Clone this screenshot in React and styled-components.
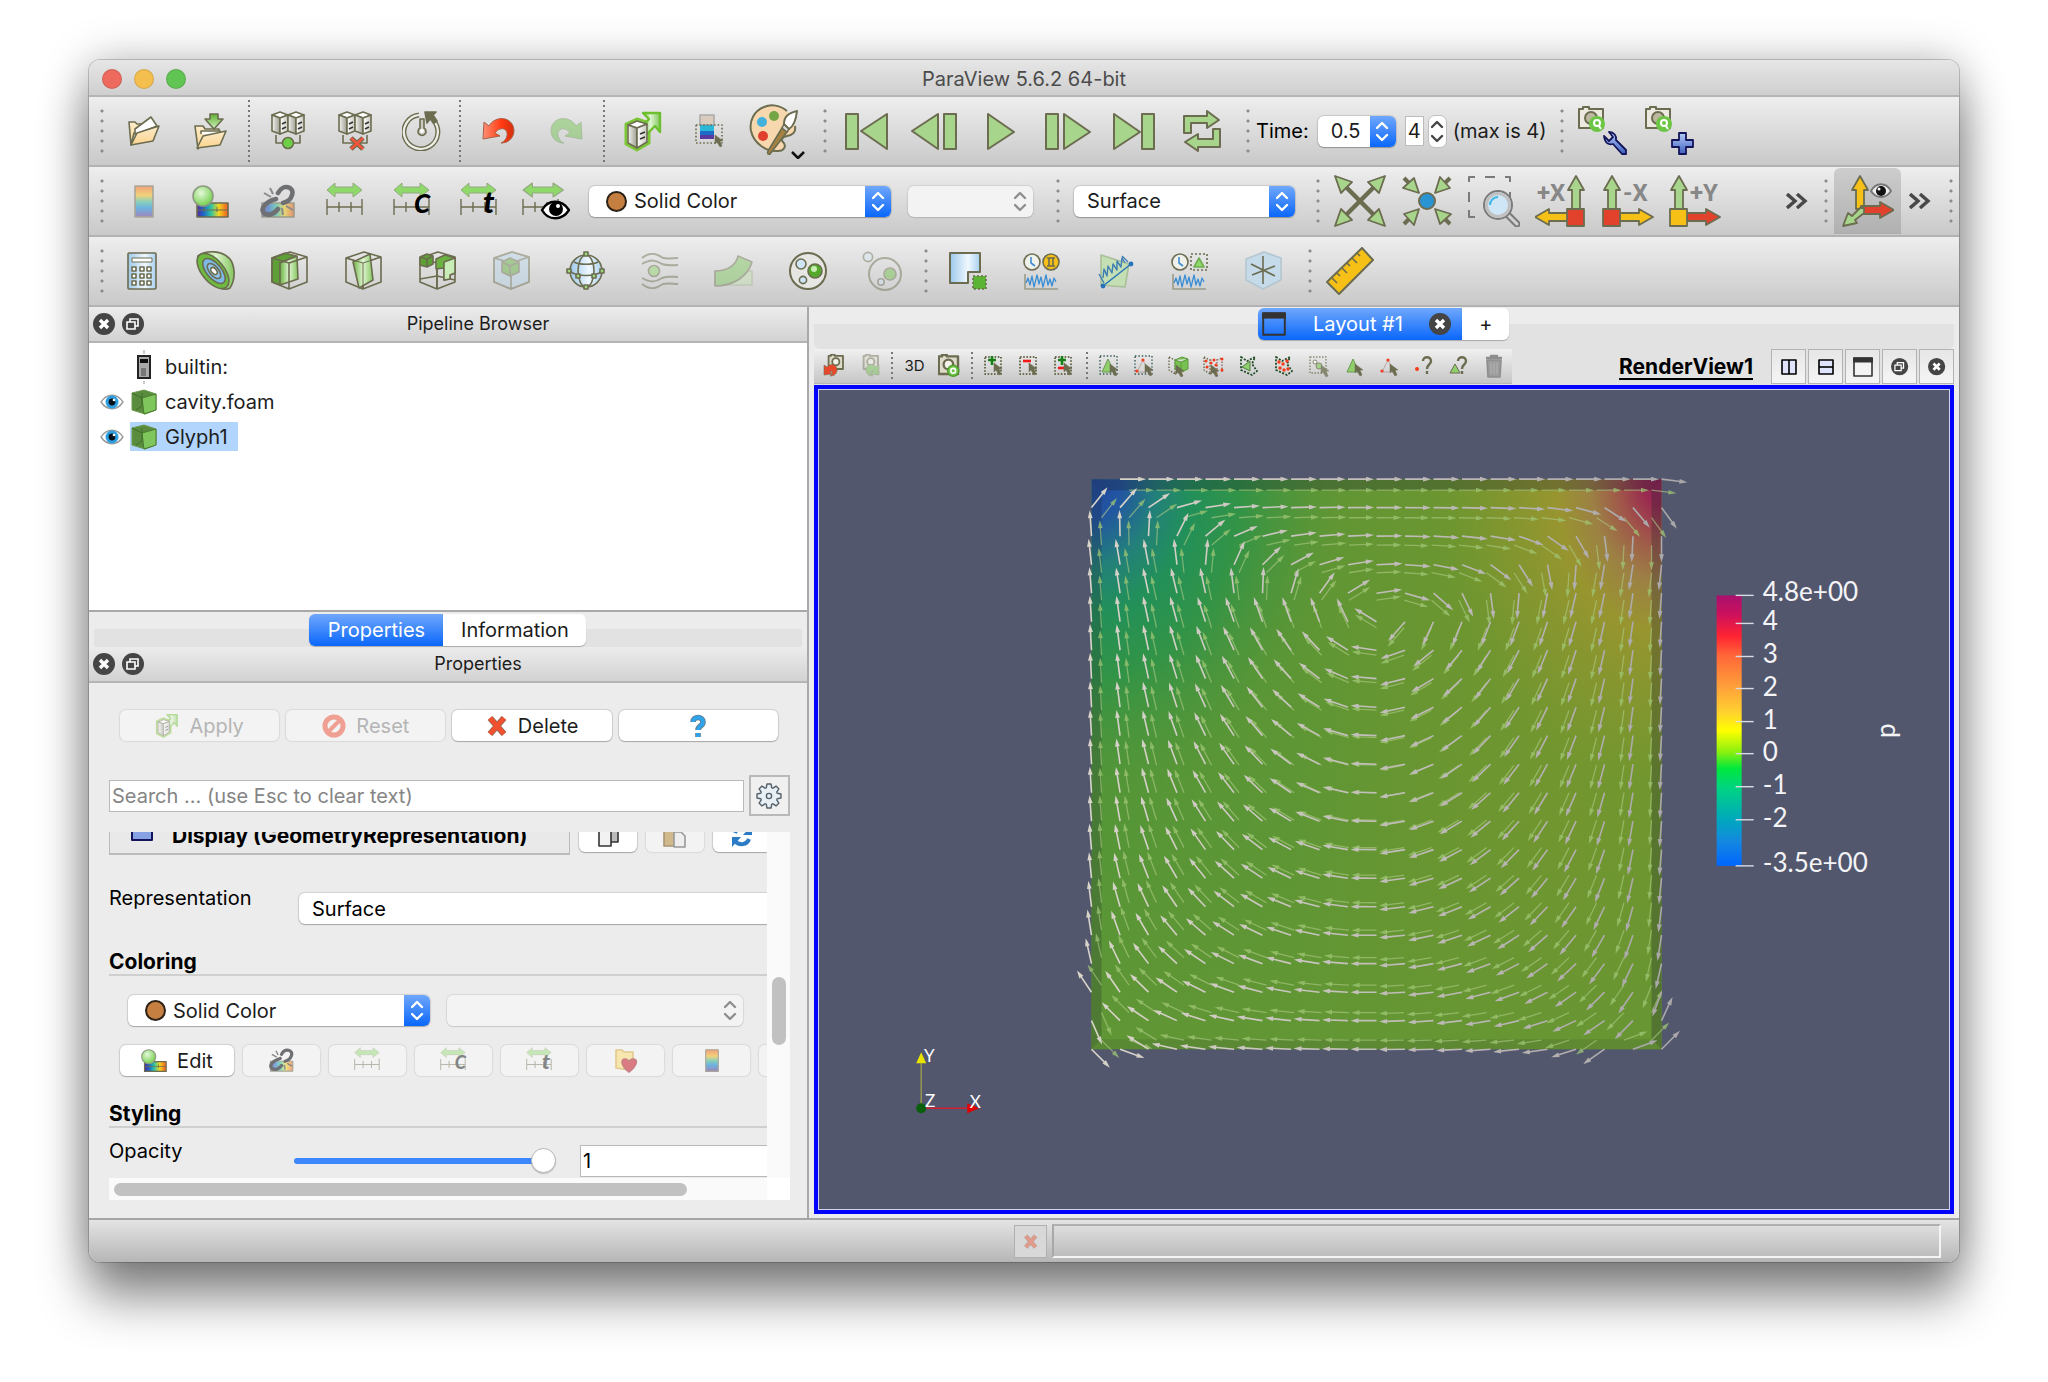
import React, { useMemo, useState } from "react";
import styled, { createGlobalStyle, css } from "styled-components";

const GlobalStyle = createGlobalStyle`
  * {
    box-sizing: border-box;
  }
  body {
    margin: 0;
    background: #fff;
    color: #1c1c1c;
    font-family: Inter, "Liberation Sans", sans-serif;
    font-size: 20px;
    line-height: 24px;
  }
  button, input, select {
    font: inherit;
    color: inherit;
    margin: 0;
  }
  svg {
    display: block;
    flex: none;
  }
`;

/* ---------- window frame ---------- */

const Desktop = styled.div`
  padding: 60px 89px 118px;
  overflow: hidden;
`;
const Window = styled.div`
  border-radius: 11px;
  background: #ececec;
  overflow: hidden;
  box-shadow: 0 0 0 1px rgba(0, 0, 0, 0.18), 0 0 44px rgba(0, 0, 0, 0.26),
    0 36px 50px rgba(0, 0, 0, 0.45);
`;
const TitleBar = styled.header`
  display: grid;
  grid-template-columns: 1fr auto 1fr;
  align-items: center;
  height: 37px;
  padding: 2px 13px 0;
  color: #4c4c4c;
  background: linear-gradient(#e6e6e6, #cfcfcf);
  border-bottom: 2px solid #b5b5b5;
`;
const Lights = styled.div`
  display: flex;
  gap: 12px;
`;
const Light = styled.button`
  width: 20px;
  height: 20px;
  padding: 0;
  border: 1px solid rgba(0, 0, 0, 0.12);
  border-radius: 50%;
  background: ${(p) => p.$color};
`;

/* ---------- tool bars ---------- */

const ToolBar = styled.div`
  display: flex;
  align-items: center;
  height: 70px;
  padding-left: 5px;
  background: linear-gradient(#eeeeee, #c9c9c9);
  border-bottom: 2px solid #b2b2b2;
`;
const Group = styled.div`
  display: flex;
  align-items: center;
  gap: ${(p) => p.$gap || 0}px;
  margin-left: ${(p) => p.$left || 0}px;
`;
const Handle = styled.span`
  flex: none;
  width: 16px;
  height: 50px;
  margin-left: ${(p) => p.$left || 0}px;
  background: radial-gradient(circle at 8px 5px, #8b8b8b 1px, transparent 2px) 0 0 / 16px 10px;
`;
const Separator = styled.span`
  flex: none;
  width: 10px;
  align-self: stretch;
  margin: 3px 0;
  background: linear-gradient(#777 2px, transparent 2px) 4px 0 / 2px 5px repeat-y;
`;
const ToolButton = styled.button`
  display: flex;
  align-items: center;
  justify-content: center;
  flex: none;
  width: ${(p) => p.$width || 67}px;
  height: 66px;
  padding: 0;
  border: 0;
  background: none;
  ${(p) =>
    p.$pressed &&
    css`
      border-radius: 6px 6px 0 0;
      background: linear-gradient(#cdcdcd, #b0b0b0);
    `}
`;
const Spacer = styled.span`
  flex: 1;
`;

/* ---------- form controls ---------- */

const ComboBox = styled.div`
  display: flex;
  align-items: center;
  flex: none;
  width: ${(p) => p.$width}px;
  height: 31px;
  margin-left: ${(p) => p.$left || 0}px;
  padding-left: ${(p) => p.$pad || 13}px;
  border-radius: 6px;
  overflow: hidden;
  background: ${(p) => (p.$off ? "#f3f3f3" : "#fff")};
  box-shadow: 0 0 1px 1px rgba(0, 0, 0, ${(p) => (p.$off ? 0.08 : 0.12)}),
    0 1px 1px rgba(0, 0, 0, ${(p) => (p.$off ? 0.08 : 0.2)});
  select {
    flex: 1;
    min-width: 0;
    height: 31px;
    padding: 0;
    border: 0;
    outline: 0;
    appearance: none;
    background: none;
    opacity: 1;
  }
`;
const ComboArrow = styled.span`
  display: flex;
  align-items: center;
  justify-content: center;
  width: 26px;
  height: 31px;
  background: ${(p) => (p.$off ? "none" : "linear-gradient(#6fa7fb, #0a67fb)")};
`;
const Swatch = styled.span`
  width: 21px;
  height: 21px;
  margin-right: 7px;
  border: 2px solid #2b2116;
  border-radius: 50%;
  background: #c47f41;
`;
const TimeLabel = styled.label`
  margin-right: 9px;
  white-space: nowrap;
  color: #000;
`;
const StepField = styled.input`
  width: 19px;
  height: 30px;
  margin-left: 9px;
  padding: 0 2px;
  border: 1px solid #bbb;
  background: #fff;
`;
const Stepper = styled.span`
  display: flex;
  align-items: center;
  justify-content: center;
  width: 19px;
  height: 33px;
  margin: 0 6px 0 4px;
  border: 1px solid #c0c0c0;
  border-radius: 7px;
  background: #fff;
`;
const PushButton = styled.button`
  display: flex;
  align-items: center;
  justify-content: center;
  gap: 10px;
  flex: ${(p) => (p.$width ? "none" : 1)};
  width: ${(p) => (p.$width ? p.$width + "px" : "auto")};
  height: 31px;
  padding: 0;
  border: 0;
  border-radius: 6px;
  background: #fff;
  box-shadow: 0 0 1px 1px rgba(0, 0, 0, 0.12), 0 1px 1px rgba(0, 0, 0, 0.2);
  &:disabled {
    color: #b5b5b5;
    background: #f3f3f3;
    box-shadow: 0 0 1px 1px rgba(0, 0, 0, 0.08);
  }
`;

/* ---------- left docks ---------- */

const Body = styled.div`
  display: flex;
  background: #ececec;
`;
const LeftColumn = styled.div`
  flex: 0 0 38.5%;
  min-width: 0;
  border-right: 2px solid #a9a9a9;
`;
const DockTitle = styled.div`
  display: grid;
  grid-template-columns: 60px 1fr;
  align-items: center;
  height: 36px;
  font-size: 18px;
  text-align: center;
  background: linear-gradient(#ececec, #d2d2d2);
  border-bottom: 2px solid #b4b4b4;
`;
const DockButtons = styled.div`
  display: flex;
  gap: 6px;
  padding-left: 4px;
`;
const RoundButton = styled.button`
  padding: 0;
  border: 0;
  background: none;
`;
const Tree = styled.ul`
  height: 269px;
  margin: 0;
  padding: 6px 0 0 11px;
  list-style: none;
  background: #fff;
  border-bottom: 2px solid #a9a9a9;
`;
const TreeRow = styled.li`
  display: flex;
  align-items: center;
  height: 35px;
`;
const EyeSlot = styled.span`
  display: flex;
  width: 30px;
`;
const TreeItem = styled.span`
  display: flex;
  align-items: center;
  height: 29px;
  padding-right: 10px;
  background: ${(p) => (p.$selected ? "#b2d5fe" : "none")};
`;
const TreeIcon = styled.span`
  display: flex;
  justify-content: center;
  width: 27px;
  margin-right: 8px;
`;
const TabStrip = styled.div`
  display: flex;
  justify-content: center;
  height: 35px;
  margin: 0 5px;
  padding-top: 2px;
  background: linear-gradient(transparent 17px, #e2e2e2 17px);
`;
const Tab = styled.button`
  display: flex;
  align-items: center;
  justify-content: center;
  width: ${(p) => p.$width}px;
  height: 32px;
  padding: 0;
  border: 0;
  color: ${(p) => (p.$active ? "#fff" : "#1c1c1c")};
  background: ${(p) => (p.$active ? "linear-gradient(#6fa7fb, #0a67fb)" : "#fff")};
  border-radius: ${(p) => (p.$active ? "6px 0 0 6px" : "0 6px 6px 0")};
  box-shadow: 0 1px 1px rgba(0, 0, 0, 0.25);
`;
const PropertiesPanel = styled.div`
  padding: 27px 17px 16px 20px;
`;
const ActionRow = styled.div`
  display: flex;
  gap: 7px;
  padding: 0 12px 0 11px;
`;
const SearchRow = styled.div`
  display: flex;
  align-items: center;
  gap: 5px;
  margin-top: 34px;
`;
const SearchField = styled.input`
  flex: 1;
  height: 32px;
  padding: 0 2px;
  border: 1px solid #b9b9b9;
  outline: 0;
  background: #fff;
  &::placeholder {
    color: #858585;
    opacity: 1;
  }
`;
const GearButton = styled.button`
  display: flex;
  align-items: center;
  justify-content: center;
  width: 41px;
  height: 41px;
  padding: 0;
  border: 2px solid #b9b9b9;
  background: #f0f0f0;
`;
const ScrollArea = styled.div`
  display: grid;
  grid-template-columns: 1fr 23px;
  grid-template-rows: 346px 22px;
  margin-top: 16px;
`;
const ScrollContent = styled.div`
  min-width: 0;
  overflow: hidden;
`;
const VerticalTrack = styled.div`
  padding: 145px 4px 0 5px;
  background: #fafafa;
`;
const HorizontalTrack = styled.div`
  padding: 5px 80px 0 5px;
  background: #fafafa;
`;
const Corner = styled.div`
  background: #fff;
`;
const Thumb = styled.div`
  width: ${(p) => (p.$vertical ? "14px" : "100%")};
  height: ${(p) => (p.$vertical ? 68 : 13)}px;
  border-radius: 7px;
  background: #c1c1c1;
`;
const DisplayRow = styled.div`
  display: flex;
  align-items: center;
  gap: 9px;
  margin-top: -15px;
`;
const DisplayHeader = styled.div`
  display: flex;
  align-items: center;
  gap: 19px;
  flex: none;
  width: 461px;
  height: 38px;
  padding-left: 21px;
  font-size: 21px;
  font-weight: 700;
  color: #000;
  background: #e9e9e9;
  border: 1px solid #bbb;
  border-bottom-width: 2px;
`;
const FieldRow = styled.div`
  display: flex;
  align-items: flex-start;
  margin-top: ${(p) => p.$top}px;
  color: #000;
`;
const FieldLabel = styled.label`
  flex: none;
  width: ${(p) => p.$width}px;
`;
const Offset = styled.div`
  display: flex;
  padding-top: 7px;
`;
const SectionTitle = styled.h2`
  height: 26px;
  margin: ${(p) => p.$top}px 0 0;
  font-size: 21px;
  line-height: 24px;
  font-weight: 700;
  color: #000;
  border-bottom: 2px solid #cfcfcf;
`;
const ControlRow = styled.div`
  display: flex;
  gap: ${(p) => p.$gap}px;
  margin-top: 19px;
  padding-left: ${(p) => p.$left}px;
`;
const Slider = styled.input`
  flex: none;
  width: 262px;
  height: 26px;
  margin: 9px 24px 0 0;
  appearance: none;
  background: none;
  &::-webkit-slider-runnable-track {
    height: 6px;
    border-radius: 3px;
    background: linear-gradient(90deg, #3c87fb 240px, #c4c4c4 240px);
  }
  &::-webkit-slider-thumb {
    appearance: none;
    width: 25px;
    height: 25px;
    margin-top: -10px;
    border: 1px solid #b8b8b8;
    border-radius: 50%;
    background: #fff;
    box-shadow: 0 1px 1px rgba(0, 0, 0, 0.2);
  }
`;
const ValueField = styled.input`
  flex: none;
  width: 220px;
  height: 32px;
  margin-top: 6px;
  padding: 0 2px;
  border: 1px solid #b9b9b9;
  background: #fff;
`;

/* ---------- render view ---------- */

const RightColumn = styled.div`
  display: flex;
  flex-direction: column;
  flex: 1;
  min-width: 0;
  padding: 0 5px 4px;
`;
const LayoutStrip = styled(TabStrip)`
  height: 42px;
  margin: 0;
  padding-top: 1px;
  border-radius: 6px;
`;
const LayoutTab = styled(Tab)`
  justify-content: space-between;
  padding: 0 10px 0 4px;
`;
const ViewHeader = styled.div`
  display: flex;
  align-items: center;
  height: 36px;
  padding-bottom: 1px;
  background: #e2e2e2;
`;
const ViewTools = styled.div`
  display: flex;
  align-items: center;
  height: 35px;
  padding-left: 3px;
  font-size: 15px;
  background: linear-gradient(#f0f0f0, #c6c6c6);
  border-bottom: 1px solid #b5b5b5;
  button {
    height: 34px;
  }
`;
const ViewName = styled.span`
  margin: 0 18px 0 auto;
  font-size: 21px;
  font-weight: 700;
  color: #000;
  text-decoration: underline;
  text-decoration-thickness: 2px;
  text-underline-offset: 4px;
`;
const ViewButtons = styled.div`
  display: flex;
  gap: 2px;
`;
const ViewButton = styled.button`
  display: flex;
  align-items: center;
  justify-content: center;
  width: 35px;
  height: 35px;
  padding: 0;
  border: 1px solid #b3b3b3;
  background: linear-gradient(#e6e6e6, #f5f5f5);
`;
const Viewport = styled.div`
  flex: 1;
  display: flex;
  min-height: 0;
  border: 4px solid #0000fd;
  outline: 1px solid #cfd2ee;
  outline-offset: -5px;
  background: #52576e;
  svg {
    flex: 1;
    width: 100%;
    min-width: 0;
  }
`;

const StatusBar = styled.footer`
  display: flex;
  align-items: center;
  justify-content: flex-end;
  gap: 5px;
  height: 44px;
  padding-right: 18px;
  background: linear-gradient(#e4e4e4, #b6b6b6);
  border-top: 2px solid #a5a5a5;
`;
const StopButton = styled.button`
  display: flex;
  align-items: center;
  justify-content: center;
  width: 33px;
  height: 33px;
  padding: 0;
  border: 1px solid #b0b0b0;
  background: #d8d8d8;
`;
const Progress = styled.div`
  width: 48%;
  height: 34px;
  border: 2px solid #f4f4f4;
  border-top-color: #b0b0b0;
  border-left-color: #a8a8a8;
`;

/* ---------- icons ---------- */

const OLIVE = "#6c6c50";
const GREEN = "#a7d58b";

const Svg = ({ w, h, s = 1, fade, children }) => (
  <svg
    width={w * s}
    height={h * s}
    viewBox={`0 0 ${w} ${h}`}
    fill="none"
    stroke={OLIVE}
    strokeWidth="1.6"
    strokeLinejoin="round"
    opacity={fade ? 0.45 : 1}
    aria-hidden="true"
  >
    {children}
  </svg>
);

const Gradient = ({ id, stops, flat }) => (
  <linearGradient id={id} x1="0" y1="0" x2={flat ? 1 : 0} y2={flat ? 0 : 1}>
    {stops.map(([offset, color, opacity = 1]) => (
      <stop key={offset} offset={offset} stopColor={color} stopOpacity={opacity} />
    ))}
  </linearGradient>
);

const Defs = () => (
  <svg width="0" height="0" style={{ position: "absolute" }} aria-hidden="true">
    <defs>
      <Gradient id="side" flat stops={[[0, "#f4f4f0"], [1, "#9d9d93"]]} />
      <Gradient id="front" flat stops={[[0, "#fff"], [1, "#c8c8c0"]]} />
      <Gradient id="folder" stops={[[0, "#fdeccb"], [1, "#fbd28d"]]} />
      <Gradient id="leaf" stops={[[0, "#5cb030"], [1, "#d5f2c5"]]} />
      <Gradient id="leafAcross" flat stops={[[0, "#6bb340"], [0.5, "#dff5d2"], [1, "#83c65c"]]} />
      <Gradient id="red" flat stops={[[0, "#ff9077"], [0.6, "#ff3a10"], [1, "#d33010"]]} />
      <Gradient id="sky" flat stops={[[0, "#9cc8ea"], [0.6, "#f0f8ff"], [1, "#a8d0ee"]]} />
      <Gradient id="navy" stops={[[0, "#b4cdf8"], [1, "#3f5fc0"]]} />
      <Gradient
        id="bar"
        stops={[[0, "#eda07a"], [0.3, "#f2d27a"], [0.5, "#8cd0b8"], [0.7, "#6bb4e0"], [1, "#a184bb"]]}
      />
      <Gradient
        id="rainbow"
        flat
        stops={[[0, "#5a2a9a"], [0.2, "#1c62c8"], [0.45, "#2fc3a0"], [0.7, "#f4d520"], [1, "#ee5a20"]]}
      />
      <radialGradient id="ball" cx="0.4" cy="0.35" r="0.7">
        <stop offset="0" stopColor="#e4f7da" />
        <stop offset="1" stopColor="#6fcf45" />
      </radialGradient>
    </defs>
  </svg>
);

const FolderIcon = () => (
  <Svg w={32} h={31}>
    <path d="M1 6h6l2 2h6v6l-9 3-3 12H3z" fill="url(#folder)" />
    <path d="M7 13 23 1l6 9-18 7-4 1z" fill="#fff" />
    <path d="M3 29 9 17 31 10 25 25z" fill="url(#folder)" />
  </Svg>
);
const ImportIcon = () => (
  <Svg w={33} h={37}>
    <path d="M1 13h8l2 3h14v6l-16 2-5 12z" fill="url(#folder)" />
    <path d="M7 21V18h19v4" fill="#fff" />
    <path d="M3 35 9 23 32 18 26 32z" fill="url(#folder)" />
    <path d="M16 1h8v5h5l-9 10-9-10h5z" fill="url(#leaf)" />
  </Svg>
);
const Racks = () => (
  <>
    <path d="M5 24v8h24v-8" />
    {[1, 17].map((x) => (
      <g key={x} transform={`translate(${x} 1)`}>
        <path d="M0 3 8 0l8 3-8 3z" fill="#fff" />
        <path d="M0 3l8 3v16l-8-3z" fill="url(#side)" />
        <path d="M8 6l8-3v16l-8 3z" fill="url(#front)" />
        <path d="m10 12 4-2m-4 7 4-2" stroke="#333" />
      </g>
    ))}
  </>
);
const ConnectIcon = () => (
  <Svg w={34} h={40}>
    <Racks />
    <circle cx="17" cy="32" r="5.5" fill="#6ccf45" />
  </Svg>
);
const DisconnectIcon = () => (
  <Svg w={34} h={40}>
    <Racks />
    <path d="m13 27 12 11m0-11L13 38" strokeWidth="5" />
    <path d="m13 27 12 11m0-11L13 38" stroke="#f4553a" strokeWidth="2.6" />
  </Svg>
);
const ResetIcon = () => (
  <Svg w={40} h={40}>
    <path d="M17 4A17 17 0 1 0 31 9" strokeWidth="5" />
    <path d="M17 4A17 17 0 1 0 31 9" strokeWidth="2.2" stroke="#efefe8" />
    <path d="M23 1h11l-3 3 4 6-3 2-4-4-3 4z" fill={OLIVE} />
    <path d="M18 8h4v9a4 4 0 1 1-4 0z" fill="#c9c9bd" />
    <circle cx="20" cy="20" r="2" fill="#fff" stroke="none" />
  </Svg>
);
const UndoIcon = ({ redo }) => (
  <Svg w={34} h={28} fade={redo}>
    <path
      transform={redo ? "translate(34 0) scale(-1 1)" : undefined}
      d="M1 22 2 5l5 4C12 0 25-1 30 7c5 8 0 19-11 19 7-3 8-12 3-14-4-1-7 1-9 4l5 3z"
      fill={redo ? "#6fc24a" : "url(#red)"}
      stroke={redo ? "#6a9a55" : "#a8604a"}
      strokeWidth="1"
    />
  </Svg>
);
const ApplyIcon = ({ s, fade }) => (
  <Svg w={40} h={42} s={s} fade={fade}>
    <path d="M3 14 14 9l12 4v20l-12 7-11-6z" fill="#fff" stroke="#7cc636" strokeWidth="3" />
    <path d="M20 3h17v19l-5-6-8 8-6-6 8-9z" fill="url(#leafAcross)" stroke="#6cc02e" strokeWidth="2.4" />
    <path d="M5 15 14 11l10 3-10 4z" fill="#fff" />
    <path d="m5 15 9 3v20l-9-5z" fill="url(#side)" />
    <path d="m14 18 10-4v18l-10 6z" fill="url(#front)" />
    <path d="m17 24 5-2m-5 7 5-2" stroke="#333" />
  </Svg>
);
const Cursor = ({ x, y }) => (
  <path
    transform={`translate(${x} ${y})`}
    d="M0 0v9l2-2 3 5 2-1-2-5h3z"
    fill={OLIVE}
    strokeWidth="0.5"
  />
);
const PickMapIcon = () => (
  <Svg w={30} h={34}>
    <rect x="5" y="1" width="14" height="10" fill="#d9cbbd" stroke="#aaa" />
    <rect x="5" y="11" width="14" height="14" fill="#1c6cc8" stroke="none" />
    <rect x="5" y="11" width="14" height="6" fill="#2bb8d8" stroke="none" />
    <rect x="5" y="21" width="14" height="4" fill="#5b3aa0" stroke="none" />
    <rect x="1" y="11" width="26" height="18" strokeDasharray="1.6 2" />
    <Cursor x={20} y={21} />
  </Svg>
);
const PaletteIcon = () => (
  <Svg w={56} h={56}>
    <path
      d="M38 8C31 2 22 1 15 4 5 8 0 18 2 28c3 13 16 21 27 20 6 0 9-5 5-9-3-3 0-5 4-6 6-1 9-4 8-10"
      fill="#f7d8ae"
      strokeWidth="2"
    />
    <circle cx="13" cy="19" r="5" fill="#42b2dc" stroke="none" />
    <circle cx="25" cy="13" r="5" fill="#74a544" stroke="none" />
    <circle cx="14" cy="33" r="5" fill="#e0402e" stroke="none" />
    <path d="m33 25 5 4-17 22c-2 1-3-1-2-3z" fill="#a58242" />
    <path d="m33 25 2-4 5 5-2 3z" fill="#ddd" />
    <path d="M35 21c0-8 5-11 13-13-1 9-3 15-8 18z" fill="#fff" strokeWidth="2" />
    <path d="m43 49 6 6 6-6" stroke="#111" strokeWidth="2.5" />
  </Svg>
);

const VcrIcon = ({ w, bar, tri }) => (
  <Svg w={w} h={37}>
    <g fill={GREEN} strokeWidth="2">
      {bar !== undefined && <rect x={bar} y="1" width="12" height="35" />}
      <path d={tri} />
    </g>
  </Svg>
);
const LoopIcon = () => (
  <Svg w={38} h={42}>
    <g fill={GREEN} strokeWidth="2">
      <path d="M1 6h23V1l12 9-12 8v-5H8v10H1z" />
      <path d="M37 19v18H15v4L2 32l13-8v5h15V19z" />
    </g>
  </Svg>
);
const Camera = () => (
  <>
    <path d="M5 1h6v2h14v19H1V3h4z" fill="#eceae0" strokeWidth="2" />
    <circle cx="13" cy="12" r="6" fill="#bbb89e" strokeWidth="2" />
    <circle cx="19" cy="18" r="8" fill="#6cc644" stroke="none" />
    <circle cx="19" cy="17" r="3" stroke="#fff" strokeWidth="2" />
    <path d="m21 20 2 3" stroke="#fff" strokeWidth="2" />
  </>
);
const CameraIcon = ({ plus }) => (
  <Svg w={50} h={50}>
    <Camera />
    {plus ? (
      <path d="M34 27h7v7h7v7h-7v7h-7v-7h-7v-7h7z" fill="url(#navy)" stroke="#14145a" strokeWidth="1.8" />
    ) : (
      <path
        d="M26 30c1 8 5 9 9 8l9 10h4v-4L38 34c1-4-2-8-7-8l4 5-4 4z"
        fill="url(#navy)"
        stroke="#14145a"
        strokeWidth="1.8"
      />
    )}
  </Svg>
);

const MapBarIcon = ({ s }) => (
  <Svg w={20} h={33} s={s}>
    <rect x="1" y="1" width="18" height="31" fill="url(#bar)" stroke="#aaa699" />
  </Svg>
);
const EditMapIcon = ({ s }) => (
  <Svg w={37} h={33} s={s}>
    <rect x="5" y="18" width="31" height="14" fill="url(#rainbow)" />
    <path d="M5 25h31m-24-3v5m13-5v5" strokeWidth="1" />
    <circle cx="11" cy="11" r="10" fill="url(#ball)" stroke="#8f9a83" />
  </Svg>
);
const ChainIcon = ({ s }) => (
  <Svg w={36} h={35} s={s}>
    <g opacity="0.55">
      <rect x="2" y="19" width="32" height="14" fill="url(#rainbow)" />
    </g>
    <path
      d="M18 9c5-10 17-6 14 2-1 4-5 7-9 8m-7-4C5 18 0 25 4 29c5 4 11 0 14-4"
      stroke="#6f7073"
      strokeWidth="4.6"
      strokeLinecap="round"
    />
    <path d="m10 4 3 6M4 9l7 4m11 11 1 7m3-9 7 4" stroke="#8a8a8a" strokeWidth="2" />
  </Svg>
);
const RangeIcon = ({ letter, eye, s, fade }) => (
  <Svg w={eye ? 48 : 38} h={38} s={s} fade={fade}>
    <path
      transform={eye ? "scale(1.15 1)" : undefined}
      d="m1 8 8-7v4h18V1l9 7-9 7v-4H9v4z"
      fill="#8fd96b"
      stroke="#93a980"
      strokeWidth="1"
    />
    <path d="M1 17v16m35-16v16M1 25h35M13 20v10m12-10v10" strokeWidth="1.4" />
    {letter && (
      <text
        x={letter === "C" ? 21 : 23}
        y="31"
        fill="#000"
        stroke="none"
        fontFamily="Lato, sans-serif"
        fontSize={letter === "C" ? 26 : 31}
        fontStyle="italic"
        fontWeight="900"
      >
        {letter}
      </text>
    )}
    {eye && (
      <>
        <path d="M20 28c6-11 20-11 27 0-7 11-21 11-27 0z" fill="#fff" stroke="#000" strokeWidth="2.4" />
        <circle cx="34" cy="27" r="7" fill="#000" stroke="none" />
        <circle cx="36" cy="24" r="2" fill="#fff" stroke="none" />
      </>
    )}
  </Svg>
);

// one arrow pointing to the top left, turned into the four corners
const Corners = ({ inward }) =>
  [0, 90, 180, 270].map((angle) => (
    <g key={angle} transform={`rotate(${angle} 26 26)`}>
      {inward ? (
        <>
          <path d="m3 3 7 7" strokeWidth="4" />
          <path d="M18 18 13 3 2 13z" fill={GREEN} strokeWidth="1.8" />
        </>
      ) : (
        <>
          <path d="M26 26 12 12" strokeWidth="4.5" />
          <path d="m1 1 17 6L7 18z" fill={GREEN} strokeWidth="1.8" />
        </>
      )}
    </g>
  ));
const ZoomFitIcon = () => (
  <Svg w={52} h={52}>
    <Corners />
  </Svg>
);
const ZoomDataIcon = () => (
  <Svg w={52} h={52}>
    <Corners inward />
    <circle cx="26" cy="26" r="8" fill="#2a93d2" strokeWidth="2" />
  </Svg>
);
const ZoomBoxIcon = () => (
  <Svg w={52} h={52}>
    <path d="M1 7V2h6m10 0h10m10 0h5v5M1 17v10m0 8v7h6m35-25v6" stroke="#7a7a7a" strokeWidth="2" />
    <path d="m38 38 11 11" stroke="#7a7a7a" strokeWidth="7" strokeLinecap="round" />
    <path d="m38 38 11 11" stroke="#d2d2d2" strokeWidth="3" strokeLinecap="round" />
    <circle cx="30" cy="30" r="14" fill="#cfe6f7" stroke="#7a7a7a" strokeWidth="2" />
    <circle cx="30" cy="30" r="11.5" stroke="#c0c0c0" strokeWidth="3" />
    <path d="M22 30a8 8 0 0 1 8-8" stroke="#3ab4e4" strokeWidth="2" />
  </Svg>
);
const UP = "M-4 0v-19h-4l8-14 8 14h-4V0z";
const AxisIcon = ({ label, left, box, side }) => {
  const x = left ? 41 : 10;
  return (
    <Svg w={52} h={52}>
      <g strokeWidth="1.8">
        <path transform={`translate(${x} 34)`} d={UP} fill={GREEN} />
        <path transform={`translate(${x} 42) rotate(${left ? -90 : 90}) translate(0 -8)`} d={UP} fill={side} />
        <rect x={x - 9} y="34" width="17" height="17" fill={box} />
      </g>
      <text
        x={left ? 2 : 21}
        y="26"
        fill="#878787"
        stroke="none"
        fontFamily="Roboto, sans-serif"
        fontSize="24"
        fontWeight="700"
      >
        {label}
      </text>
    </Svg>
  );
};
const OrientationIcon = () => (
  <Svg w={52} h={52}>
    <g strokeWidth="1.8">
      <path transform="translate(18 34)" d={UP} fill="#f6c016" />
      <path transform="translate(19 35) rotate(90)" d={UP} fill="#e2412c" />
      <path d="m18 33-8 8-4-3-5 13 14-3-2-3 9-7v-5z" fill={GREEN} />
    </g>
    <path d="M29 16c5-9 15-9 20 0-5 8-15 8-20 0z" fill="#eee" stroke="#777" strokeWidth="2" />
    <circle cx="39" cy="16" r="5" fill="#111" stroke="none" />
    <circle cx="37" cy="14" r="1.5" fill="#fff" stroke="none" />
  </Svg>
);
const MoreIcon = () => (
  <Svg w={22} h={16}>
    <path d="m1 1 8 7-8 7M11 1l8 7-8 7" stroke="#484848" strokeWidth="3.4" strokeLinejoin="miter" />
  </Svg>
);

const CalculatorIcon = () => (
  <Svg w={30} h={38}>
    <rect x="1" y="1" width="28" height="36" rx="1" fill="url(#sky)" />
    <rect x="5" y="6" width="20" height="4" fill="#fff" strokeWidth="1" />
    {[15, 22, 29].map((y) =>
      [5, 13, 20].map((x) => <rect key={x + "-" + y} x={x} y={y} width="4" height="4" fill="#fff" />)
    )}
  </Svg>
);
const ContourIcon = () => (
  <Svg w={40} h={40}>
    <path d="M2 5C10-1 26-1 34 8c5 7 6 20 0 29-5 3-14 0-20-7C7 23 0 12 2 5z" fill="url(#leafAcross)" />
    <ellipse cx="17" cy="20" rx="21" ry="11" transform="rotate(50 17 20)" fill="#6dba3f" />
    <ellipse cx="18" cy="20" rx="15" ry="7.5" transform="rotate(50 18 20)" fill="#7db9e6" />
    <ellipse cx="18" cy="20" rx="9" ry="4.5" transform="rotate(50 18 20)" fill="#8fc6ee" />
    <ellipse cx="18" cy="20" rx="4" ry="2.5" transform="rotate(50 18 20)" fill="#fff" />
  </Svg>
);
const CubeWire = () => <path d="M1 7 19 1l17 5v25l-18 7-17-7zM1 7l17 5 18-6M18 12v26" />;
const ClipIcon = () => (
  <Svg w={38} h={40}>
    <path d="M1 7 14 2l11 3-16 7v22L1 31z" fill="#5ea036" />
    <path d="m9 12 17-7 1 23-18 6z" fill="url(#leafAcross)" />
    <CubeWire />
  </Svg>
);
const SliceIcon = () => (
  <Svg w={38} h={40}>
    <CubeWire />
    <path d="m8 11 17-8 3 26-14 8z" fill="url(#leafAcross)" />
    <path d="M1 7l17 5 18-6M18 12v26" strokeWidth="1" />
  </Svg>
);
const ThresholdIcon = () => (
  <Svg w={38} h={40}>
    <CubeWire />
    <path d="m1 28 17-3 18 4M18 12v26" />
    <path d="m1 6 7-3 6 2v8l-6 3-7-2z" fill="#5ea036" />
    <path d="m1 6 7 2 6-3M8 8v8" />
    <path d="m17 8 9-4 10 3v15l-5 2v4l-6 1V17l-8 1z" fill="#6bb340" />
    <path d="M25 11l11-4v15l-5 2v4l-6 1z" fill="#c9edb6" />
  </Svg>
);
const SubsetIcon = () => (
  <Svg w={38} h={40} fade>
    <path d="M1 7 19 1l17 5v25l-18 7-17-7z" fill="#b9d6ea" />
    <CubeWire />
    <path d="m9 11 8-4 9 4v10l-9 4-8-4z" fill="#5fae38" />
    <path d="m9 11 8 4 9-4m-9 4v10" />
  </Svg>
);
const GlyphIcon = () => (
  <Svg w={40} h={40}>
    <circle cx="20" cy="20" r="16" fill="url(#sky)" />
    <ellipse cx="20" cy="20" rx="8" ry="16" />
    <path d="M4 20c6 6 26 6 32 0M8 11c5 3 19 3 24 0" />
    {[[20, 3], [20, 36], [3, 20], [36, 20], [12, 25], [28, 25]].map(([x, y]) => (
      <rect key={x + "-" + y} x={x - 2} y={y - 2} width="4" height="4" fill="#9bdc7c" />
    ))}
  </Svg>
);
const StreamIcon = () => (
  <Svg w={38} h={36} fade>
    <path
      d="M1 5C10-2 16 1 22 5c5 1 10 0 15 0M1 11c9-5 14-4 20 0 5 2 10 1 16 1M1 31c9 7 15 4 21 0 5-1 10 0 15 0M1 25c9 5 14 4 20 0 5-2 10-1 16-1"
      strokeWidth="2"
    />
    <circle cx="13" cy="18" r="5.5" fill="#8fd96b" />
  </Svg>
);
const WarpIcon = () => (
  <Svg w={40} h={34} fade>
    <path d="M1 17h37v14H1z" fill="#c6e5b4" stroke="#a5b894" />
    <path d="M1 17C14 17 22 11 24 2l14 6C34 22 20 32 1 32z" fill="#7ec85c" />
  </Svg>
);
const GroupIcon = () => (
  <Svg w={40} h={40}>
    <circle cx="20" cy="20" r="18" fill="#e6e6e2" strokeWidth="2" />
    <circle cx="13" cy="13" r="5" fill="#cfe4f4" />
    <circle cx="15" cy="29" r="3.6" fill="#cfe4f4" />
    <circle cx="27" cy="20" r="7" fill="#55a82c" />
    <circle cx="26" cy="18" r="3" fill="#c8edb4" stroke="none" />
  </Svg>
);
const LevelIcon = () => (
  <Svg w={40} h={40} fade>
    <circle cx="23" cy="23" r="16" strokeWidth="2" />
    <circle cx="6" cy="6" r="4.6" fill="#d5e8f5" />
    <circle cx="19" cy="31" r="3.2" fill="#cfe4f4" />
    <circle cx="28" cy="23" r="6" fill="#6fc046" />
  </Svg>
);
const ExtractIcon = () => (
  <Svg w={40} h={40}>
    <path d="M2 2h30v19H20v11H2z" fill="url(#sky)" strokeWidth="2" />
    <rect x="25" y="25" width="13" height="13" fill="#5bb434" strokeDasharray="2 2" />
  </Svg>
);
const Wave = () => (
  <path
    d="m3 31 2-5 2 7 2-9 2 11 3-12 2 9 2-7 2 10 3-12 2 10 2-6 2 7 2-8 2 4"
    stroke="#3b8ed4"
    strokeWidth="1.3"
  />
);
const Clock = () => (
  <>
    <circle cx="9" cy="10" r="8" fill="#f1f1ec" />
    <path d="M8 5v6l4 3" stroke="#3b8ed4" />
    <path d="M2 22v15h33" stroke="#9b9b8a" />
  </>
);
const PlotTimeIcon = () => (
  <Svg w={38} h={38}>
    <Clock />
    <Wave />
    <circle cx="28" cy="10" r="8" fill="#f6c016" />
    <path d="M24 6h8m-8 8h8m-6-8v8m4-8v8" />
  </Svg>
);
const PlotSelectionIcon = () => (
  <Svg w={38} h={38}>
    <Clock />
    <Wave />
    <rect x="20" y="2" width="16" height="16" strokeDasharray="2 2" />
    <path d="m28 6 5 9H23z" fill="#8fd96b" stroke="#6fae50" />
  </Svg>
);
const PlotLineIcon = () => (
  <Svg w={38} h={38}>
    <path d="m4 3 28 9-4 23-24-2z" fill="#c4dfb4" stroke="#a8bf98" />
    <path
      d="m6 26 1-9 3 7 1-10 4 7 1-9 4 6V9l4 6 1-9 3 5M2 22l5 9M25 4l6 6"
      stroke="#3c7eb4"
      strokeWidth="1.4"
    />
    <path d="M6 34 34 12" stroke="#2572b8" strokeWidth="1.4" />
    <circle cx="6" cy="34" r="2.4" fill="#2572b8" stroke="none" />
    <circle cx="34" cy="12" r="2.4" fill="#2572b8" stroke="none" />
  </Svg>
);
const ProbeIcon = () => (
  <Svg w={38} h={40}>
    <path d="M1 8 19 1l17 6v22l-18 9-17-9z" fill="#c6dbea" stroke="#b4c6d0" />
    <path d="M18 5v28M6 13l24 12M7 24l23-9" />
  </Svg>
);
const RulerIcon = () => (
  <Svg w={48} h={48}>
    <path d="M1 35 36 1l11 12-34 34z" fill="#f6c016" strokeWidth="2" />
    <path d="m6 31 5 5m0-10 3 3m2-8 5 5m0-10 3 3m2-8 5 5m0-10 3 3" strokeWidth="1.6" />
  </Svg>
);

const UpDown = ({ color = "#fff", h = 21 }) => (
  <Svg w={13} h={h}>
    <path
      d={`m1 7 5-5 5 5M1 ${h - 7}l5 5 5-5`}
      stroke={color}
      strokeWidth="2.4"
      strokeLinecap="round"
    />
  </Svg>
);
const CloseIcon = ({ size = 23 }) => (
  <svg width={size} height={size} viewBox="0 0 23 23" aria-hidden="true">
    <circle cx="11" cy="11" r="11" fill="#454545" />
    <path d="m7 7 8 8m0-8-8 8" stroke="#fff" strokeWidth="3.4" />
  </svg>
);
const FloatIcon = ({ size = 23 }) => (
  <svg width={size} height={size} viewBox="0 0 23 23" aria-hidden="true">
    <circle cx="11" cy="11" r="11" fill="#454545" />
    <path d="M8 9V6h8v7h-3M5 9h8v7H5z" fill="none" stroke="#fff" strokeWidth="1.6" />
  </svg>
);
const ServerIcon = () => (
  <svg width="14" height="34" viewBox="0 0 14 34" aria-hidden="true">
    <path d="M7 0v4M7 31v3" stroke="#999" />
    <rect x="1" y="6" width="12" height="22" fill="#aaa" stroke="#222" strokeWidth="2" />
    <path d="M3 9h8v4H3z" fill="#111" />
    <path d="M4 18h5v8H4z" fill="#777" />
  </svg>
);
const SourceIcon = () => (
  <Svg w={26} h={26}>
    <path d="m1 4 12-3 12 4v16l-11 4-13-4z" fill="#5a8c3d" stroke="#6a9a4c" strokeWidth="1" />
    <path d="m11 9 14-4v16l-12 4z" fill="#7fc65c" stroke="#4c7a32" strokeWidth="1" />
    <path d="m1 4 10 5m-6 12 6-4V4" stroke="#3f6e28" strokeWidth="1" />
  </Svg>
);
const EyeIcon = () => (
  <Svg w={24} h={16}>
    <path d="M1 8c6-9 16-9 22 0-6 9-16 9-22 0z" fill="#fff" stroke="#9a9a9a" strokeWidth="1.4" />
    <circle cx="12" cy="8" r="6.5" fill="#2d9fe0" stroke="none" />
    <circle cx="12" cy="8" r="3.4" fill="#06111c" stroke="none" />
    <circle cx="14" cy="6" r="1.3" fill="#fff" stroke="none" />
  </Svg>
);
const RedCross = ({ s, fade }) => (
  <Svg w={22} h={22} s={s} fade={fade}>
    <path d="m4 3 14 16m0-16L4 19" stroke="#9a6a50" strokeWidth="6.4" />
    <path d="m4 3 14 16m0-16L4 19" stroke="#f2502e" strokeWidth="4.4" />
  </Svg>
);
const ForbidIcon = () => (
  <Svg w={24} h={24} fade>
    <circle cx="12" cy="12" r="9" stroke="#ee3a20" strokeWidth="5" />
    <path d="M6 18 18 6" stroke="#ee3a20" strokeWidth="4" />
  </Svg>
);
const HelpIcon = () => (
  <Svg w={18} h={24}>
    {["#5f7f8f", "#2fa4ec"].map((color, i) => (
      <path key={color} d="M4 8c0-6 10-6 10 0 0 4-5 4-5 8m0 3v4" stroke={color} strokeWidth={5.6 - i * 1.8} />
    ))}
  </Svg>
);
const GearIcon = () => (
  <Svg w={26} h={26}>
    {[0, 45, 90, 135, 180, 225, 270, 315].map((a) => (
      <path
        key={a}
        transform={`rotate(${a} 13 13)`}
        d="M10 6l1-5h4l1 5"
        fill="#e8f0f6"
        stroke="#55606a"
        strokeWidth="1.4"
      />
    ))}
    <circle cx="13" cy="13" r="8" fill="#e8f0f6" stroke="none" />
    <circle cx="13" cy="13" r="2.600" stroke="#55606a" strokeWidth="1.4" />
  </Svg>
);
const CopyIcon = () => (
  <Svg w={24} h={24}>
    <path d="M11 1h11v17H11z" fill="#bbb" stroke="#333" />
    <path d="M3 5h12v17H3z" fill="#f2f2f2" stroke="#333" />
  </Svg>
);
const PasteIcon = () => (
  <Svg w={24} h={24}>
    <path d="M1 2h15v20H1z" fill="#d0b98a" stroke="#a69675" />
    <path d="M11 8h7l4 4v11H11z" fill="#eee" stroke="#999" />
  </Svg>
);
const ReloadIcon = () => (
  <Svg w={24} h={24}>
    <path d="M5 9c2-6 10-7 14-2M19 15c-2 6-10 7-14 2" stroke="#2b7cc4" strokeWidth="4" />
    <path d="M22 1v10h-9zM2 23V13h9z" fill="#2b7cc4" stroke="none" />
  </Svg>
);
const FavoriteIcon = () => (
  <Svg w={24} h={24}>
    <g opacity="0.65">
      <path d="M2 1h6l2 2h9v16l-4 2-13-2z" fill="#fbe08c" stroke="#d8b45a" />
      <path d="M15 23c-9-7-8-13-4-13 3 0 4 3 4 3s1-3 4-3c5 0 5 6-4 13z" fill="#d13b48" stroke="#b0444a" />
    </g>
  </Svg>
);

/* small icons above the render view */

const MiniCamera = ({ arrow, fade }) => (
  <Svg w={22} h={24} fade={fade}>
    <g transform={arrow ? "translate(5 0) scale(0.6)" : "scale(0.8)"}>
      <path d="M5 1h6v2h14v22H1V3h4z" fill="#dedbcb" strokeWidth="3" />
      <circle cx="13" cy="13" r="6" fill="#f2f2ea" strokeWidth="3" />
      {!arrow && <circle cx="19" cy="21" r="7" fill="#6cc644" stroke="#4d9a2c" />}
      {!arrow && <circle cx="19" cy="21" r="3" stroke="#fff" strokeWidth="2" />}
    </g>
    {arrow && (
      <path
        transform={arrow === "redo" ? "translate(22 0) scale(-1 1)" : undefined}
        d="M1 21V11l3 2c4-5 11-2 10 4-1 4-4 5-7 5 3-2 3-5 0-5l2 3z"
        fill={arrow === "redo" ? "#6fc24a" : "#e8492c"}
        strokeWidth="0.6"
      />
    )}
  </Svg>
);
const Box = () => <rect x="1" y="2" width="16" height="17" strokeDasharray="1.6 1.6" strokeWidth="2" />;
const ModIcon = ({ kind }) => (
  <Svg w={20} h={22}>
    <Box />
    {kind !== "minus" && <path d="M8 1v9M4 5h8" stroke="#168016" strokeWidth="2.600" />}
    {kind !== "plus" && <path d={kind === "minus" ? "M4 6h8" : "M4 13h8"} stroke="#f01818" strokeWidth="2.600" />}
    <Cursor x={10} y={8} />
  </Svg>
);
const Triangle = ({ points }) =>
  points ? (
    <>
      <path d="m9 5-6 12h12z" strokeWidth="0.8" stroke="#a99" />
      {[[9, 5], [3, 16], [15, 15]].map(([x, y]) => (
        <circle key={x} cx={x} cy={y} r="1.6" fill="#f33c1c" stroke="none" />
      ))}
    </>
  ) : (
    <path d="m9 4 6 13H3z" fill="#8fd06c" stroke="#6d9a55" strokeWidth="1" />
  );
const PickIcon = ({ points, boxed }) => (
  <Svg w={20} h={22}>
    {boxed && <rect x="1" y="1" width="17" height="18" strokeDasharray="1.400 2" stroke="#355" strokeWidth="1.4" />}
    <Triangle points={points} />
    <Cursor x={11} y={9} />
  </Svg>
);
const FrustumIcon = ({ points }) => (
  <Svg w={22} h={22}>
    <path d="m1 2 6 3v14l-6-4zM7 19l5-2" strokeDasharray="1.500 1.500" strokeWidth="1.4" />
    {points ? (
      <>
        <path d="M7 5h7v12H7m7-12 5-2v14" strokeDasharray="1.500 1.500" strokeWidth="1.2" stroke="#855" />
        {[[3, 6], [8, 8], [4, 12], [11, 5], [13, 10], [19, 4], [19, 15], [9, 14]].map(([x, y], i) => (
          <circle key={i} cx={x} cy={y} r="1.5" fill="#f33c1c" stroke="none" />
        ))}
      </>
    ) : (
      <path d="M7 5l7-3 6 2v10l-6 3-7-3zM7 5l6 2 7-3M13 7v9" fill="#79c052" stroke="#5b9a3b" strokeWidth="1" />
    )}
    <Cursor x={8} y={10} />
  </Svg>
);
const PolygonIcon = ({ points }) => (
  <Svg w={20} h={22}>
    <path d="m2 2 6 4 8-4-3 7 5 7-5 4-11-5z" stroke="#1f4a24" strokeWidth="1.8" strokeDasharray="2 1.500" />
    {points ? (
      [[5, 7], [9, 9], [13, 6], [6, 13], [10, 15], [14, 14]].map(([x, y], i) => (
        <circle key={i} cx={x} cy={y} r="1.7" fill="#f33c1c" stroke="none" />
      ))
    ) : (
      <path d="m11 6 0 10-8-4z" fill="#8fd06c" stroke="#4d7a40" strokeWidth="1" />
    )}
  </Svg>
);
const BlockIcon = () => (
  <Svg w={20} h={22}>
    <g opacity="0.75">
      <rect x="1" y="2" width="16" height="16" strokeDasharray="1.500 1.500" strokeWidth="1.4" />
      <circle cx="6" cy="7" r="2" fill="#fff" strokeWidth="1" />
      <circle cx="10" cy="11" r="3" fill="#8fd06c" strokeWidth="1" />
      <Cursor x={12} y={10} />
    </g>
  </Svg>
);
const HoverIcon = ({ points }) => (
  <Svg w={20} h={22}>
    {points ? (
      <circle cx="3" cy="14" r="2" fill="#f33c1c" stroke="none" />
    ) : (
      <path d="m6 9 5 9H1z" fill="#8fd06c" strokeWidth="1" />
    )}
    <path d="M9 6c0-5 8-5 8 0 0 4-4 3-4 8m0 2v3" strokeWidth="2.4" />
  </Svg>
);
const TrashIcon = () => (
  <Svg w={18} h={24}>
    <path d="M2 6h14l-1 17H3z" fill="#9c9c9c" stroke="#8d8d8d" />
    <path d="M1 4h16M6 4V2h6v2" stroke="#8d8d8d" strokeWidth="2.4" />
    <path d="M6 9v11m3-11v11m3-11v11" stroke="#b4b4b4" strokeWidth="1" />
  </Svg>
);
const SplitIcon = ({ down }) => (
  <Svg w={16} h={16}>
    <rect x="1" y="1" width="14" height="14" fill="#dfe4fa" stroke="#000" strokeWidth="1.6" />
    <path d={down ? "M1 8h14" : "M8 1v14"} stroke="#000" strokeWidth="1.6" />
  </Svg>
);
const MaximizeIcon = ({ s, fill = "#f3f3f3" }) => (
  <Svg w={20} h={20} s={s}>
    <rect x="1" y="1" width="18" height="18" fill={fill} stroke="#333" />
    <path d="M0 3h20" stroke="#333" strokeWidth="5" />
  </Svg>
);

/* ---------- cavity flow ---------- */

const CELLS = 20;

// Directions in degrees, clockwise from the x axis, for the points where the
// mesh is too coarse: the two rows under the lid and the corner eddies.
const NEAR_WALL = {
  1: { 0: -52, 1: -49, 2: -34, 3: -16, 4: -9, 16: 7, 17: 15, 18: 33, 19: 50, 20: 54 },
  2: { 0: -94, 1: -91, 2: -87, 3: -64, 4: -40, 5: -23, 14: 9, 15: 20, 16: 35, 17: 60, 18: 83, 19: 93, 20: 90 },
  18: { 0: -124 },
  19: { 0: 66, 20: -65 },
  20: { 0: 45, 1: 20, 2: -148, 17: 162, 18: 145, 19: -20, 20: -45 },
};

// Steady lid driven cavity, stream function / vorticity form.
// The grid is twice as fine as the mesh, so the odd nodes are the cell centres.
function solveCavity(re = 10, sweeps = 3000) {
  const n = CELLS * 2;
  const m = n + 1;
  const h = 1 / n;
  const psi = new Float64Array(m * m);
  const w = new Float64Array(m * m);
  const relax = (k, value) => {
    w[k] += 0.3 * (value - w[k]);
  };
  for (let s = 0; s < sweeps; s++) {
    for (let i = 1; i < n; i++) {
      relax(n * m + i, (-2 * psi[(n - 1) * m + i]) / (h * h) - 2 / h);
      relax(i, (-2 * psi[m + i]) / (h * h));
      relax(i * m, (-2 * psi[i * m + 1]) / (h * h));
      relax(i * m + n, (-2 * psi[i * m + n - 1]) / (h * h));
    }
    for (let j = 1; j < n; j++) {
      for (let i = 1; i < n; i++) {
        const k = j * m + i;
        const sum = psi[k - 1] + psi[k + 1] + psi[k - m] + psi[k + m];
        psi[k] += 1.7 * ((sum + h * h * w[k]) / 4 - psi[k]);
        const u = (psi[k + m] - psi[k - m]) / (2 * h);
        const v = -(psi[k + 1] - psi[k - 1]) / (2 * h);
        const drift = u * (w[k + 1] - w[k - 1]) + v * (w[k + m] - w[k - m]);
        w[k] = (w[k - 1] + w[k + 1] + w[k - m] + w[k + m] - (re * h * drift) / 2) / 4;
      }
    }
  }
  const cell = (i, j) => {
    const k = (2 * j + 1) * m + 2 * i + 1;
    return [psi[k + m] - psi[k - m], -(psi[k + 1] - psi[k - 1])];
  };
  const arrows = [];
  for (let row = 0; row <= CELLS; row++) {
    for (let col = 0; col <= CELLS; col++) {
      if (row === 0 && col === 0) continue;
      let u = 0;
      let v = 0;
      for (const j of [CELLS - row - 1, CELLS - row]) {
        for (const i of [col - 1, col]) {
          if (i < 0 || j < 0 || i >= CELLS || j >= CELLS) continue;
          const [cu, cv] = cell(i, j);
          u += cu;
          v += cv;
        }
      }
      const fixed = NEAR_WALL[row]?.[col];
      let angle = fixed === undefined ? Math.atan2(-v, u) : (fixed * Math.PI) / 180;
      // the lid itself drags the flow straight to the right
      if (row === 0) angle = col === CELLS ? 0.12 : 0;
      arrows.push({ row, col, angle });
    }
  }
  return arrows;
}

const FRONT = { x: 1092, y: 480, size: 569 };
const BACK = { x: 1102, y: 491, size: 549 };

const arrowPaths = (arrows, layer, length) => {
  const step = layer.size / CELLS;
  let shafts = "";
  let heads = "";
  for (const { row, col, angle } of arrows) {
    const x = layer.x + col * step;
    const y = layer.y + row * step;
    const c = Math.cos(angle);
    const s = Math.sin(angle);
    const at = (along, across) =>
      `${(x + along * c - across * s).toFixed(1)} ${(y + along * s + across * c).toFixed(1)}`;
    shafts += `M${at(0, 0)}L${at(length - 7, 0)}`;
    heads += `M${at(length, 0)}L${at(length - 8, 2.4)}L${at(length - 8, -2.4)}Z`;
  }
  return { shafts, heads };
};

const LEGEND = [
  ["4.8e+00", 596, 602],
  ["4", 624, 631],
  ["3", 657, 664],
  ["2", 689, 696],
  ["1", 722, 729],
  ["0", 754, 761],
  ["-1", 787, 794],
  ["-2", 820, 827],
  ["-3.5e+00", 866, 872],
];

const Scene = () => {
  const [front, back] = useMemo(() => {
    const arrows = solveCavity();
    return [arrowPaths(arrows, FRONT, 26), arrowPaths(arrows, BACK, 25)];
  }, []);
  return (
    <svg viewBox="819 390 1130 820" role="img" aria-label="Cavity flow coloured by pressure">
      <defs>
        <Gradient id="base" flat stops={[[0, "#529638"], [0.35, "#5d9635"], [0.6, "#6a9631"], [0.85, "#74962f"], [1, "#70962f"]]} />
        <Gradient id="lower" stops={[[0, "#659633", 0], [0.6, "#659633", 0.1], [1, "#649634", 0.8]]} />
        <Gradient id="shade" flat stops={[[0, "#aaa7a6"], [0, "#d9d5ca"], [1, "#a9a6a8"]]} />
        <radialGradient id="low" gradientUnits="userSpaceOnUse" cx="0" cy="0" r="1" gradientTransform="translate(1092 480) scale(250 330)">
          <stop offset="0" stopColor="#22489a" />
          <stop offset="0.12" stopColor="#2255a2" />
          <stop offset="0.26" stopColor="#23807a" />
          <stop offset="0.4" stopColor="#22905a" />
          <stop offset="0.6" stopColor="#2e9348" stopOpacity="0.9" />
          <stop offset="1" stopColor="#52963a" stopOpacity="0" />
        </radialGradient>
        <radialGradient id="high" gradientUnits="userSpaceOnUse" cx="0" cy="0" r="1" gradientTransform="translate(1661 480) scale(235 340)">
          <stop offset="0" stopColor="#93205a" />
          <stop offset="0.08" stopColor="#9a2a50" />
          <stop offset="0.18" stopColor="#a0554a" />
          <stop offset="0.3" stopColor="#9c8044" />
          <stop offset="0.45" stopColor="#98952f" />
          <stop offset="0.72" stopColor="#85962f" stopOpacity="0.7" />
          <stop offset="1" stopColor="#70962f" stopOpacity="0" />
        </radialGradient>
        <Gradient
          id="legend"
          stops={[
            [0, "#a8106e"], [0.07, "#cc105c"], [0.15, "#ff2332"], [0.22, "#ff6538"], [0.34, "#ffa13a"],
            [0.43, "#ffd030"], [0.5, "#ffff00"], [0.58, "#88f010"], [0.64, "#00e83c"], [0.71, "#00d480"],
            [0.83, "#00a8be"], [0.91, "#1488e0"], [1, "#0066ff"],
          ]}
        />
      </defs>

      {["base", "lower", "low", "high"].map((id) => (
        <rect key={id} x="1092" y="480" width="569" height="569" fill={`url(#${id})`} />
      ))}
      <g fill="#1c2030">
        <path d="M1092 480h569l-10 11h-549z" opacity="0.3" />
        <path d="M1092 480l10 11v548l-10 10z" opacity="0.24" />
        <path d="M1661 480l-10 11v548l10 10z" opacity="0.28" />
        <path d="M1092 1049l10-10h549l10 10z" opacity="0.1" />
      </g>

      <path d={back.shafts} stroke="#aecb86" strokeWidth="1.3" opacity="0.6" />
      <path d={back.heads} fill="#9fc574" opacity="0.75" />
      <path d={front.shafts} stroke="url(#shade)" strokeWidth="1.6" />
      <path d={front.heads} fill="url(#shade)" />

      <rect x="1716" y="596" width="25" height="270" fill="url(#legend)" />
      {LEGEND.map(([label, tick, baseline]) => (
        <g key={label}>
          <path d={`M1735 ${tick}h18`} stroke="#d9dae2" strokeWidth="1.4" />
          <text x="1762" y={baseline} fill="#f4f4f6" fontSize="26" fontFamily="Lato, sans-serif">
            {label}
          </text>
        </g>
      ))}
      <text
        transform="translate(1894 731) rotate(-90)"
        textAnchor="middle"
        fill="#f4f4f6"
        fontSize="26"
        fontFamily="Lato, sans-serif"
      >
        p
      </text>

      <path d="M922 1108V1060" stroke="#9c9a4a" strokeWidth="1.4" />
      <path d="M922 1108h48" stroke="#d02030" strokeWidth="1.4" />
      <path d="m922 1052 5 11h-10z" fill="#e8e400" />
      <path d="m980 1108-12-5v10z" fill="#e00000" />
      <circle cx="922" cy="1108" r="5" fill="#0b5e0b" />
      <g fill="#fff" fontSize="17" fontFamily="Lato, sans-serif" textAnchor="middle">
        <text x="930" y="1062">Y</text>
        <text x="976" y="1108">X</text>
        <text x="931" y="1107">Z</text>
      </g>
    </svg>
  );
};

/* ---------- composed parts ---------- */

const Tools = ({ items, width, gap, left }) => (
  <Group $gap={gap} $left={left}>
    {items.map(([label, icon]) => (
      <ToolButton key={label} $width={width} aria-label={label}>
        {icon}
      </ToolButton>
    ))}
  </Group>
);

const Combo = ({ label, value, swatch, off, options = [], ...box }) => (
  <ComboBox $off={off} {...box}>
    {swatch && <Swatch />}
    <select aria-label={label} defaultValue={value} disabled={off}>
      {value && <option>{value}</option>}
      {options.map((o) => (
        <option key={o}>{o}</option>
      ))}
    </select>
    <ComboArrow $off={off}>
      <UpDown color={off ? "#8f8f8f" : "#fff"} />
    </ComboArrow>
  </ComboBox>
);

const DockHeader = ({ title }) => (
  <DockTitle>
    <DockButtons>
      <RoundButton aria-label={"Close " + title}>
        <CloseIcon />
      </RoundButton>
      <RoundButton aria-label={"Float " + title}>
        <FloatIcon />
      </RoundButton>
    </DockButtons>
    {title}
  </DockTitle>
);

const TRI_LEFT = "M27 1v35L1 18z";
const TRI_RIGHT = "M1 1v35l26-17z";

const MainToolBar = () => (
  <ToolBar>
    <Handle />
    <Tools items={[["Open", <FolderIcon />], ["Save data", <ImportIcon />]]} />
    <Separator />
    <Tools
      items={[
        ["Connect", <ConnectIcon />],
        ["Disconnect", <DisconnectIcon />],
        ["Reset session", <ResetIcon />],
      ]}
    />
    <Separator />
    <Tools items={[["Undo", <UndoIcon />], ["Redo", <UndoIcon redo />]]} />
    <Separator />
    <Tools
      items={[
        ["Auto apply", <ApplyIcon />],
        ["Find data", <PickMapIcon />],
        ["Color palette", <PaletteIcon />],
      ]}
    />
    <Handle $left={7} />
    <Tools
      items={[
        ["First frame", <VcrIcon w={43} bar={1} tri="M42 1v35L16 18z" />],
        ["Previous frame", <VcrIcon w={46} bar={33} tri={TRI_LEFT} />],
        ["Play", <VcrIcon w={28} tri={TRI_RIGHT} />],
        ["Next frame", <VcrIcon w={46} bar={1} tri="M19 1v35l26-17z" />],
        ["Last frame", <VcrIcon w={43} bar={29} tri={TRI_RIGHT} />],
        ["Loop", <LoopIcon />],
      ]}
    />
    <Handle $left={5} />
    <TimeLabel htmlFor="step">Time:</TimeLabel>
    <Combo label="Time" value="0.5" options={["0", "0.1", "0.2", "0.3", "0.4"]} $width={78} />
    <StepField id="step" defaultValue="4" />
    <Stepper>
      <UpDown color="#444" h={23} />
    </Stepper>
    (max is 4)
    <Handle $left={7} />
    <Tools items={[["Camera settings", <CameraIcon />], ["Add camera", <CameraIcon plus />]]} />
  </ToolBar>
);

const DisplayToolBar = () => (
  <ToolBar>
    <Handle />
    <Tools
      items={[
        ["Color legend", <MapBarIcon />],
        ["Edit color map", <EditMapIcon />],
        ["Separate color map", <ChainIcon />],
        ["Rescale to data", <RangeIcon />],
        ["Rescale to custom", <RangeIcon letter="C" />],
        ["Rescale over time", <RangeIcon letter="t" />],
        ["Rescale to visible", <RangeIcon eye />],
      ]}
    />
    <Combo label="Color by" value="Solid Color" options={["p", "U"]} swatch $pad={17} $width={302} $left={10} />
    <Combo label="Component" off $width={125} $left={17} />
    <Handle $left={17} />
    <Combo
      label="Representation style"
      value="Surface"
      options={["Outline", "Points", "Wireframe"]}
      $width={221}
      $left={8}
    />
    <Handle $left={15} />
    <Tools
      items={[
        ["Reset camera", <ZoomFitIcon />],
        ["Zoom to data", <ZoomDataIcon />],
        ["Zoom to box", <ZoomBoxIcon />],
        ["View +X", <AxisIcon label="+X" left box="#e2412c" side="#f6c016" />],
        ["View -X", <AxisIcon label="-X" box="#e2412c" side="#f6c016" />],
        ["View +Y", <AxisIcon label="+Y" box="#f6c016" side="#e2412c" />],
      ]}
    />
    <Spacer />
    <ToolButton $width={34} aria-label="More camera tools">
      <MoreIcon />
    </ToolButton>
    <Handle $left={4} />
    <ToolButton $pressed aria-label="Show orientation axes">
      <OrientationIcon />
    </ToolButton>
    <ToolButton $width={38} aria-label="More axes tools">
      <MoreIcon />
    </ToolButton>
    <Handle $left={4} />
  </ToolBar>
);

const FilterToolBar = () => (
  <ToolBar>
    <Handle />
    <Tools
      width={64}
      gap={10}
      items={[
        ["Calculator", <CalculatorIcon />],
        ["Contour", <ContourIcon />],
        ["Clip", <ClipIcon />],
        ["Slice", <SliceIcon />],
        ["Threshold", <ThresholdIcon />],
        ["Extract subset", <SubsetIcon />],
        ["Glyph", <GlyphIcon />],
        ["Stream tracer", <StreamIcon />],
        ["Warp", <WarpIcon />],
        ["Group datasets", <GroupIcon />],
        ["Extract level", <LevelIcon />],
      ]}
    />
    <Handle $left={4} />
    <Tools
      width={64}
      gap={10}
      left={2}
      items={[
        ["Extract selection", <ExtractIcon />],
        ["Plot variables over time", <PlotTimeIcon />],
        ["Plot over line", <PlotLineIcon />],
        ["Plot selection over time", <PlotSelectionIcon />],
        ["Probe", <ProbeIcon />],
      ]}
    />
    <Handle $left={6} />
    <Tools width={64} items={[["Ruler", <RulerIcon />]]} />
  </ToolBar>
);

const PipelineTree = () => (
  <Tree>
    <TreeRow>
      <EyeSlot />
      <TreeItem>
        <TreeIcon>
          <ServerIcon />
        </TreeIcon>
        builtin:
      </TreeItem>
    </TreeRow>
    {["cavity.foam", "Glyph1"].map((name) => (
      <TreeRow key={name}>
        <EyeSlot>
          <EyeIcon />
        </EyeSlot>
        <TreeItem $selected={name === "Glyph1"}>
          <TreeIcon>
            <SourceIcon />
          </TreeIcon>
          {name}
        </TreeItem>
      </TreeRow>
    ))}
  </Tree>
);

const COLOR_BUTTONS = [
  ["Separate", <ChainIcon s={0.7} />],
  ["Rescale", <RangeIcon s={0.7} fade />],
  ["Rescale custom", <RangeIcon s={0.7} letter="C" fade />],
  ["Rescale temporal", <RangeIcon s={0.7} letter="t" fade />],
  ["Choose preset", <FavoriteIcon />],
  ["Show color legend", <MapBarIcon s={0.7} />],
  ["Edit legend", null],
];

const Properties = () => {
  const [search, setSearch] = useState("");
  return (
    <PropertiesPanel>
      <ActionRow>
        <PushButton disabled>
          <ApplyIcon s={0.6} fade /> Apply
        </PushButton>
        <PushButton disabled>
          <ForbidIcon /> Reset
        </PushButton>
        <PushButton>
          <RedCross /> Delete
        </PushButton>
        <PushButton aria-label="Help">
          <HelpIcon />
        </PushButton>
      </ActionRow>
      <SearchRow>
        <SearchField
          aria-label="Search properties"
          placeholder="Search ... (use Esc to clear text)"
          value={search}
          onChange={(e) => setSearch(e.target.value)}
        />
        <GearButton aria-label="Advanced properties">
          <GearIcon />
        </GearButton>
      </SearchRow>
      <ScrollArea>
        <ScrollContent>
          <DisplayRow>
            <DisplayHeader>
              <Svg w={22} h={12}>
                <rect x="1" y="1" width="20" height="9" fill="#86a2e4" stroke="#14145a" strokeWidth="2" />
              </Svg>
              Display (GeometryRepresentation)
            </DisplayHeader>
            <PushButton $width={58} aria-label="Copy">
              <CopyIcon />
            </PushButton>
            <PushButton $width={58} disabled aria-label="Paste">
              <PasteIcon />
            </PushButton>
            <PushButton $width={58} aria-label="Restore defaults">
              <ReloadIcon />
            </PushButton>
          </DisplayRow>
          <FieldRow $top={31}>
            <FieldLabel $width={190}>Representation</FieldLabel>
            <Offset>
              <Combo label="Representation" value="Surface" options={["Points", "Wireframe"]} $width={520} />
            </Offset>
          </FieldRow>
          <SectionTitle $top={26}>Coloring</SectionTitle>
          <ControlRow $gap={17} $left={19}>
            <Combo label="Coloring" value="Solid Color" options={["p", "U"]} swatch $pad={17} $width={302} />
            <Combo label="Coloring component" off $width={296} />
          </ControlRow>
          <ControlRow $gap={9} $left={11}>
            <PushButton $width={114}>
              <EditMapIcon s={0.7} /> Edit
            </PushButton>
            {COLOR_BUTTONS.map(([label, icon]) => (
              <PushButton key={label} $width={77} disabled aria-label={label}>
                {icon}
              </PushButton>
            ))}
          </ControlRow>
          <SectionTitle $top={26}>Styling</SectionTitle>
          <FieldRow $top={11}>
            <FieldLabel $width={185} htmlFor="opacity">
              Opacity
            </FieldLabel>
            <Slider id="opacity" type="range" min="0" max="1" step="0.01" defaultValue="1" />
            <ValueField aria-label="Opacity value" defaultValue="1" />
          </FieldRow>
        </ScrollContent>
        <VerticalTrack>
          <Thumb $vertical />
        </VerticalTrack>
        <HorizontalTrack>
          <Thumb />
        </HorizontalTrack>
        <Corner />
      </ScrollArea>
    </PropertiesPanel>
  );
};

const RenderView = () => (
  <RightColumn>
    <LayoutStrip>
      <LayoutTab $active $width={204} role="tab">
        <MaximizeIcon s={1.2} fill="none" />
        Layout #1
        <CloseIcon />
      </LayoutTab>
      <Tab $width={47} aria-label="Add layout">
        +
      </Tab>
    </LayoutStrip>
    <ViewHeader>
      <ViewTools>
        <Tools
          width={35}
          items={[
            ["Camera undo", <MiniCamera arrow="undo" />],
            ["Camera redo", <MiniCamera arrow="redo" fade />],
          ]}
        />
        <Separator />
        <Tools width={35} items={[["Interaction mode", "3D"], ["Adjust camera", <MiniCamera />]]} />
        <Separator />
        <Tools
          width={35}
          items={[
            ["Add selection", <ModIcon kind="plus" />],
            ["Subtract selection", <ModIcon kind="minus" />],
            ["Toggle selection", <ModIcon kind="both" />],
          ]}
        />
        <Separator />
        <Tools
          width={35}
          items={[
            ["Select cells on", <PickIcon boxed />],
            ["Select points on", <PickIcon boxed points />],
            ["Select cells through", <FrustumIcon />],
            ["Select points through", <FrustumIcon points />],
            ["Select cells with polygon", <PolygonIcon />],
            ["Select points with polygon", <PolygonIcon points />],
            ["Select block", <BlockIcon />],
            ["Interactive select cells", <PickIcon />],
            ["Interactive select points", <PickIcon points />],
            ["Hover points", <HoverIcon points />],
            ["Hover cells", <HoverIcon />],
            ["Clear selection", <TrashIcon />],
          ]}
        />
      </ViewTools>
      <ViewName>RenderView1</ViewName>
      <ViewButtons>
        <ViewButton aria-label="Split horizontal">
          <SplitIcon />
        </ViewButton>
        <ViewButton aria-label="Split vertical">
          <SplitIcon down />
        </ViewButton>
        <ViewButton aria-label="Maximize">
          <MaximizeIcon />
        </ViewButton>
        <ViewButton aria-label="Float view">
          <FloatIcon size={18} />
        </ViewButton>
        <ViewButton aria-label="Close view">
          <CloseIcon size={18} />
        </ViewButton>
      </ViewButtons>
    </ViewHeader>
    <Viewport>
      <Scene />
    </Viewport>
  </RightColumn>
);

function App() {
  return (
    <Desktop>
      <GlobalStyle />
      <Defs />
      <Window>
        <TitleBar>
          <Lights>
            <Light $color="#ee6a5f" aria-label="Close window" />
            <Light $color="#f5bf4f" aria-label="Minimize window" />
            <Light $color="#61c554" aria-label="Zoom window" />
          </Lights>
          ParaView 5.6.2 64-bit
        </TitleBar>
        <MainToolBar />
        <DisplayToolBar />
        <FilterToolBar />
        <Body>
          <LeftColumn>
            <DockHeader title="Pipeline Browser" />
            <PipelineTree />
            <TabStrip>
              <Tab $active $width={134} role="tab">
                Properties
              </Tab>
              <Tab $width={143} role="tab">
                Information
              </Tab>
            </TabStrip>
            <DockHeader title="Properties" />
            <Properties />
          </LeftColumn>
          <RenderView />
        </Body>
        <StatusBar>
          <StopButton aria-label="Abort">
            <RedCross s={0.7} fade />
          </StopButton>
          <Progress />
        </StatusBar>
      </Window>
    </Desktop>
  );
}

export default App;
